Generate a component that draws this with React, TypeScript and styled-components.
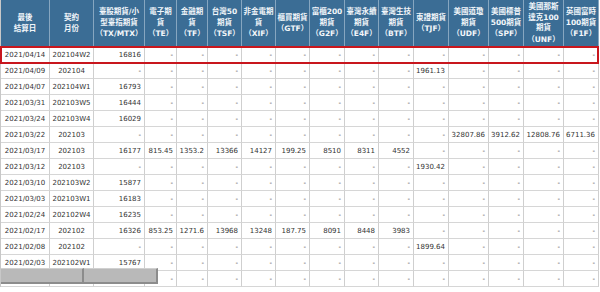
import React from 'react';
import styled, { createGlobalStyle } from 'styled-components';

const GlobalStyle = createGlobalStyle`
  html, body {
    margin: 0;
    padding: 0;
    background: #ffffff;
  }
  body {
    width: 600px;
    height: 292px;
    overflow: hidden;
  }
`;

// column widths measured from the grid lines
const COLS = '49px 44px 51px 32px 31px 34px 34px 34px 35px 34px 35px 35px 40px 35px 40px 35px';

const HEADERS = [
  '最後\n結算日',
  '契約\n月份',
  '臺股期貨/小\n型臺指期貨\n（TX/MTX）',
  '電子期\n貨\n（TE）',
  '金融期\n貨\n（TF）',
  '台灣50\n期貨\n（TSF）',
  '非金電期\n貨\n（XIF）',
  '櫃買期貨\n（GTF）',
  '富櫃200\n期貨\n（G2F）',
  '臺灣永續\n期貨\n（E4F）',
  '臺灣生技\n期貨\n（BTF）',
  '東證期貨\n（TJF）',
  '美國道瓊\n期貨\n（UDF）',
  '美國標普\n500期貨\n（SPF）',
  '美國那斯\n達克100\n期貨\n（UNF）',
  '英國富時\n100期貨\n（F1F）',
];

const dash = (n: number) => Array(n).fill('-');

const ROWS: string[][] = [
  ['2021/04/14', '202104W2', '16816', ...dash(13)],
  ['2021/04/09', '202104', ...dash(9), '1961.13', ...dash(4)],
  ['2021/04/07', '202104W1', '16793', ...dash(13)],
  ['2021/03/31', '202103W5', '16444', ...dash(13)],
  ['2021/03/24', '202103W4', '16029', ...dash(13)],
  ['2021/03/22', '202103', ...dash(10), '32807.86', '3912.62', '12808.76', '6711.36'],
  ['2021/03/17', '202103', '16177', '815.45', '1353.2', '13366', '14127', '199.25', '8510', '8311', '4552', ...dash(5)],
  ['2021/03/12', '202103', ...dash(9), '1930.42', ...dash(4)],
  ['2021/03/10', '202103W2', '15877', ...dash(13)],
  ['2021/03/03', '202103W1', '16183', ...dash(13)],
  ['2021/02/24', '202102W4', '16235', ...dash(13)],
  ['2021/02/17', '202102', '16326', '853.25', '1271.6', '13968', '13248', '187.75', '8091', '8448', '3983', ...dash(5)],
  ['2021/02/08', '202102', ...dash(9), '1899.64', ...dash(4)],
  ['2021/02/03', '202102W1', '15767', ...dash(13)],
  ['', '', '', ...dash(13)],
];

const Page = styled.div`
  width: 600px;
  height: 292px;
  overflow: hidden;
`;

const Table = styled.div`
  position: relative;
  width: 598px;
  border-left: 1px solid #c8c8c8;
  box-sizing: border-box;
`;

const Row = styled.div<{ $head?: boolean; $highlight?: boolean }>`
  display: grid;
  grid-template-columns: ${COLS};
  height: ${p => (p.$head ? '47px' : '16px')};
  background: ${p => (p.$head ? '#3b6d95' : '#ffffff')};
  position: relative;
  z-index: ${p => (p.$highlight ? 2 : 'auto')};
  outline: ${p => (p.$highlight ? '2px solid #c8161d' : 'none')};
  outline-offset: -1px;
`;

const HeadCell = styled.div`
  display: flex;
  flex-direction: column;
  justify-content: center;
  align-items: center;
  box-sizing: border-box;
  border-right: 1px solid #86a6c0;
  color: #f2f6fa;
  font-family: 'DejaVu Sans', 'Noto Sans CJK TC', sans-serif;
  font-size: 7.5px;
  font-weight: 700;
  line-height: 10.5px;
  text-align: center;
  white-space: nowrap;
  overflow: hidden;
`;

// full-width brackets come from the CJK face so they keep their spacing
const Bracket = styled.span`
  font-family: 'Noto Sans CJK TC', sans-serif;
  font-weight: 700;
`;

const Cell = styled.div<{ $center?: boolean }>`
  display: flex;
  align-items: center;
  justify-content: ${p => (p.$center ? 'center' : 'flex-end')};
  box-sizing: border-box;
  padding-right: ${p => (p.$center ? '0' : '3px')};
  border-right: 1px solid #cfcfcf;
  border-bottom: 1px solid #d6d6d6;
  color: #333333;
  font-family: 'DejaVu Sans', sans-serif;
  font-size: 7px;
  white-space: nowrap;
  overflow: hidden;
`;

// grey scroll thumb lying over the last, cut-off row
const ScrollThumb = styled.div`
  position: absolute;
  left: 0;
  bottom: 3px;
  width: 157px;
  height: 16px;
  display: flex;
  z-index: 3;
`;

const ThumbPart = styled.div<{ $w: number }>`
  width: ${p => p.$w}px;
  height: 100%;
  box-sizing: border-box;
  background: #b9b9b9;
  border-right: 2px solid #8c8c8c;
  border-bottom: 2px solid #8c8c8c;
  border-top: 1px solid #d0d0d0;
`;

const HeadLine: React.FC<{ text: string }> = ({ text }) => {
  if (text.startsWith('（')) {
    return (
      <span>
        <Bracket>（</Bracket>
        {text.slice(1, -1)}
        <Bracket>）</Bracket>
      </span>
    );
  }
  return <span>{text}</span>;
};

const App: React.FC = () => {
  return (
    <Page>
      <GlobalStyle />
      <Table>
        <Row $head>
          {HEADERS.map((h, i) => (
            <HeadCell key={i}>
              {h.split('\n').map((line, j) => (
                <HeadLine key={j} text={line} />
              ))}
            </HeadCell>
          ))}
        </Row>
        {ROWS.map((row, r) => (
          <Row key={r} $highlight={r === 0}>
            {row.map((v, c) => (
              <Cell key={c} $center={c < 2}>
                {v}
              </Cell>
            ))}
          </Row>
        ))}
        <ScrollThumb>
          <ThumbPart $w={83} />
          <ThumbPart $w={74} />
        </ScrollThumb>
      </Table>
    </Page>
  );
};

export default App;
